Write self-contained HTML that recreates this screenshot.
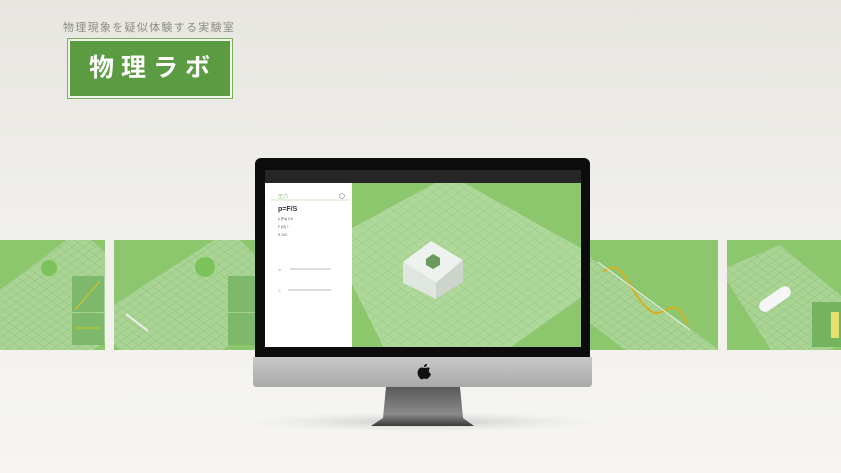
<!DOCTYPE html><html><head><meta charset="utf-8"><style>
*{margin:0;padding:0;box-sizing:border-box}
body{width:841px;height:473px;overflow:hidden;position:relative;background:linear-gradient(#e7e6e1,#f0efeb 45%,#f6f5f2);font-family:"Liberation Sans","Noto Sans CJK JP",sans-serif}
.abs{position:absolute}
.sub{left:63px;top:19px;font-size:11px;color:#8c8b83;letter-spacing:1.3px}
.logo{left:67px;top:38px;width:166px;height:61px;background:#f4f4ee;border:1px solid #7aae5c;padding:2px}
.logo div{width:100%;height:100%;background:#5b9b41;color:#fff;font-size:25px;font-weight:bold;text-align:center;line-height:54px;letter-spacing:7px;padding-left:6px}
</style></head><body>
<div class="abs sub">物理現象を疑似体験する実験室</div>
<div class="abs logo"><div>物理ラボ</div></div>

<svg class="abs" style="left:0;top:0" width="841" height="473">
<defs>
<pattern id="g" width="7" height="7" patternUnits="userSpaceOnUse" patternTransform="rotate(35) skewX(-20)">
<rect width="7" height="7" fill="#a9d494"/><path d="M0 0H7M0 0V7" stroke="#8dbd78" stroke-width="0.8"/></pattern>
<pattern id="g2" width="9" height="9" patternUnits="userSpaceOnUse" patternTransform="scale(1,0.72) rotate(45)">
<rect width="9" height="9" fill="#afd89b"/><path d="M0 0H9M0 0V9" stroke="#92c47e" stroke-width="0.8"/></pattern>
<radialGradient id="sh"><stop offset="0" stop-color="#bbb" stop-opacity=".8"/><stop offset="1" stop-color="#ddd" stop-opacity="0"/></radialGradient>
<linearGradient id="chin" x1="0" y1="0" x2="0" y2="1"><stop offset="0" stop-color="#c9c9c9"/><stop offset="1" stop-color="#a9a9a9"/></linearGradient>
<linearGradient id="st" x1="0" y1="0" x2="0" y2="1"><stop offset="0" stop-color="#5a5a5a"/><stop offset=".7" stop-color="#8a8a8a"/><stop offset="1" stop-color="#3a3a3a"/></linearGradient>
<clipPath id="c1"><rect x="0" y="240" width="105" height="110"/></clipPath>
<clipPath id="c2"><rect x="114" y="240" width="145" height="110"/></clipPath>
<clipPath id="c3"><rect x="588" y="240" width="130" height="110"/></clipPath>
<clipPath id="c4"><rect x="727" y="240" width="114" height="110"/></clipPath>
<clipPath id="cs"><rect x="352" y="183" width="229" height="164"/></clipPath>
</defs>
<g clip-path="url(#c1)"><rect x="0" y="240" width="105" height="110" fill="#8cc76e"/><polygon points="-40,320 80,230 160,300 40,390" fill="url(#g)"/>
<circle cx="49" cy="268" r="8" fill="#7cc25a"/><rect x="72" y="276" width="32" height="36" fill="#7eb86a"/><rect x="72" y="313" width="32" height="32" fill="#7eb86a"/><path d="M75 310L100 281M76 328H100" stroke="#d4c820"/></g>
<g clip-path="url(#c2)"><rect x="114" y="240" width="145" height="110" fill="#8cc76e"/><polygon points="90,320 230,230 300,300 160,390" fill="url(#g)"/>
<circle cx="205" cy="267" r="10" fill="#7cc25a"/><path d="M126 314L148 331" stroke="#eee" stroke-width="2"/><rect x="228" y="276" width="32" height="36" fill="#7eb86a"/><rect x="228" y="313" width="32" height="32" fill="#7eb86a"/></g>
<g clip-path="url(#c3)"><rect x="588" y="240" width="130" height="110" fill="#8cc76e"/><polygon points="580,250 720,350 690,400 560,300" fill="url(#g)"/>
<path d="M603 272C620 258 625 280 640 300S660 312 670 308S685 320 688 325" stroke="#d6b020" stroke-width="2" fill="none"/><path d="M598 262L690 330" stroke="#eee"/></g>
<g clip-path="url(#c4)"><rect x="727" y="240" width="114" height="110" fill="#8cc76e"/><polygon points="720,270 780,245 870,320 790,380" fill="url(#g)"/>
<rect x="757" y="293" width="36" height="12" rx="6" fill="#f6f6f6" transform="rotate(-35 775 299)"/><rect x="812" y="302" width="29" height="45" fill="#74b45e"/><rect x="831" y="312" width="8" height="26" fill="#e6e070"/></g>
<ellipse cx="423" cy="422" rx="180" ry="10" fill="url(#sh)"/>
<polygon points="386,387 460,387 463,418 474,426 371,426 383,418" fill="url(#st)"/>
<rect x="255" y="158" width="335" height="205" rx="6" fill="#0c0c0c"/>
<path d="M253 357H592V383Q592 387 588 387H257Q253 387 253 383Z" fill="url(#chin)"/>
<rect x="265" y="170" width="316" height="14" fill="#262626"/>
<path d="M420 368c2-1 4 0 5 0s3-1 5 0c-2 2-1 5 1 6-1 3-3 5-5 5-1 0-2-1-3 0s-3 0-4-2c-2-3-2-7 1-9zm4-1c0-2 1-3 3-3 0 2-1 3-3 3z" fill="#111"/>
<g clip-path="url(#cs)"><rect x="352" y="183" width="229" height="164" fill="#8dc76d"/>
<polygon points="330,240 450,175 620,270 500,355 390,360" fill="url(#g2)"/>
<polygon points="403,262 431,241 463,260 436,283" fill="#eef2ee"/>
<polygon points="403,262 436,283 436,299 403,283" fill="#dfe5df"/><polygon points="436,283 463,260 463,282 436,299" fill="#ccd4cc"/>
<polygon points="426,259 433,254 440,258 440,265 433,269 426,265" fill="#6a9a5e"/></g>
<rect x="265" y="183" width="87" height="164" fill="#fff"/>
<text x="278" y="198" font-size="5" fill="#8bbf72">圧力</text><circle cx="342" cy="196" r="2.5" fill="none" stroke="#888" stroke-width=".6"/>
<line x1="270" y1="200" x2="350" y2="200" stroke="#9ccf88" stroke-width=".5"/>
<text x="278" y="211" font-size="7" font-weight="bold" fill="#333">p=F/S</text>
<text x="278" y="220" font-size="3.5" fill="#555">p [Pa]    0.5</text><text x="278" y="228" font-size="3.5" fill="#555">F [N]      ?</text><text x="278" y="236" font-size="3.5" fill="#555">S          100</text>
<line x1="290" y1="269" x2="331" y2="269" stroke="#bbb"/><line x1="288" y1="290" x2="331" y2="290" stroke="#bbb"/>
<text x="278" y="271" font-size="4" fill="#8bbf72">m</text><text x="278" y="292" font-size="4" fill="#8bbf72">S</text>
</svg>
</body></html>
